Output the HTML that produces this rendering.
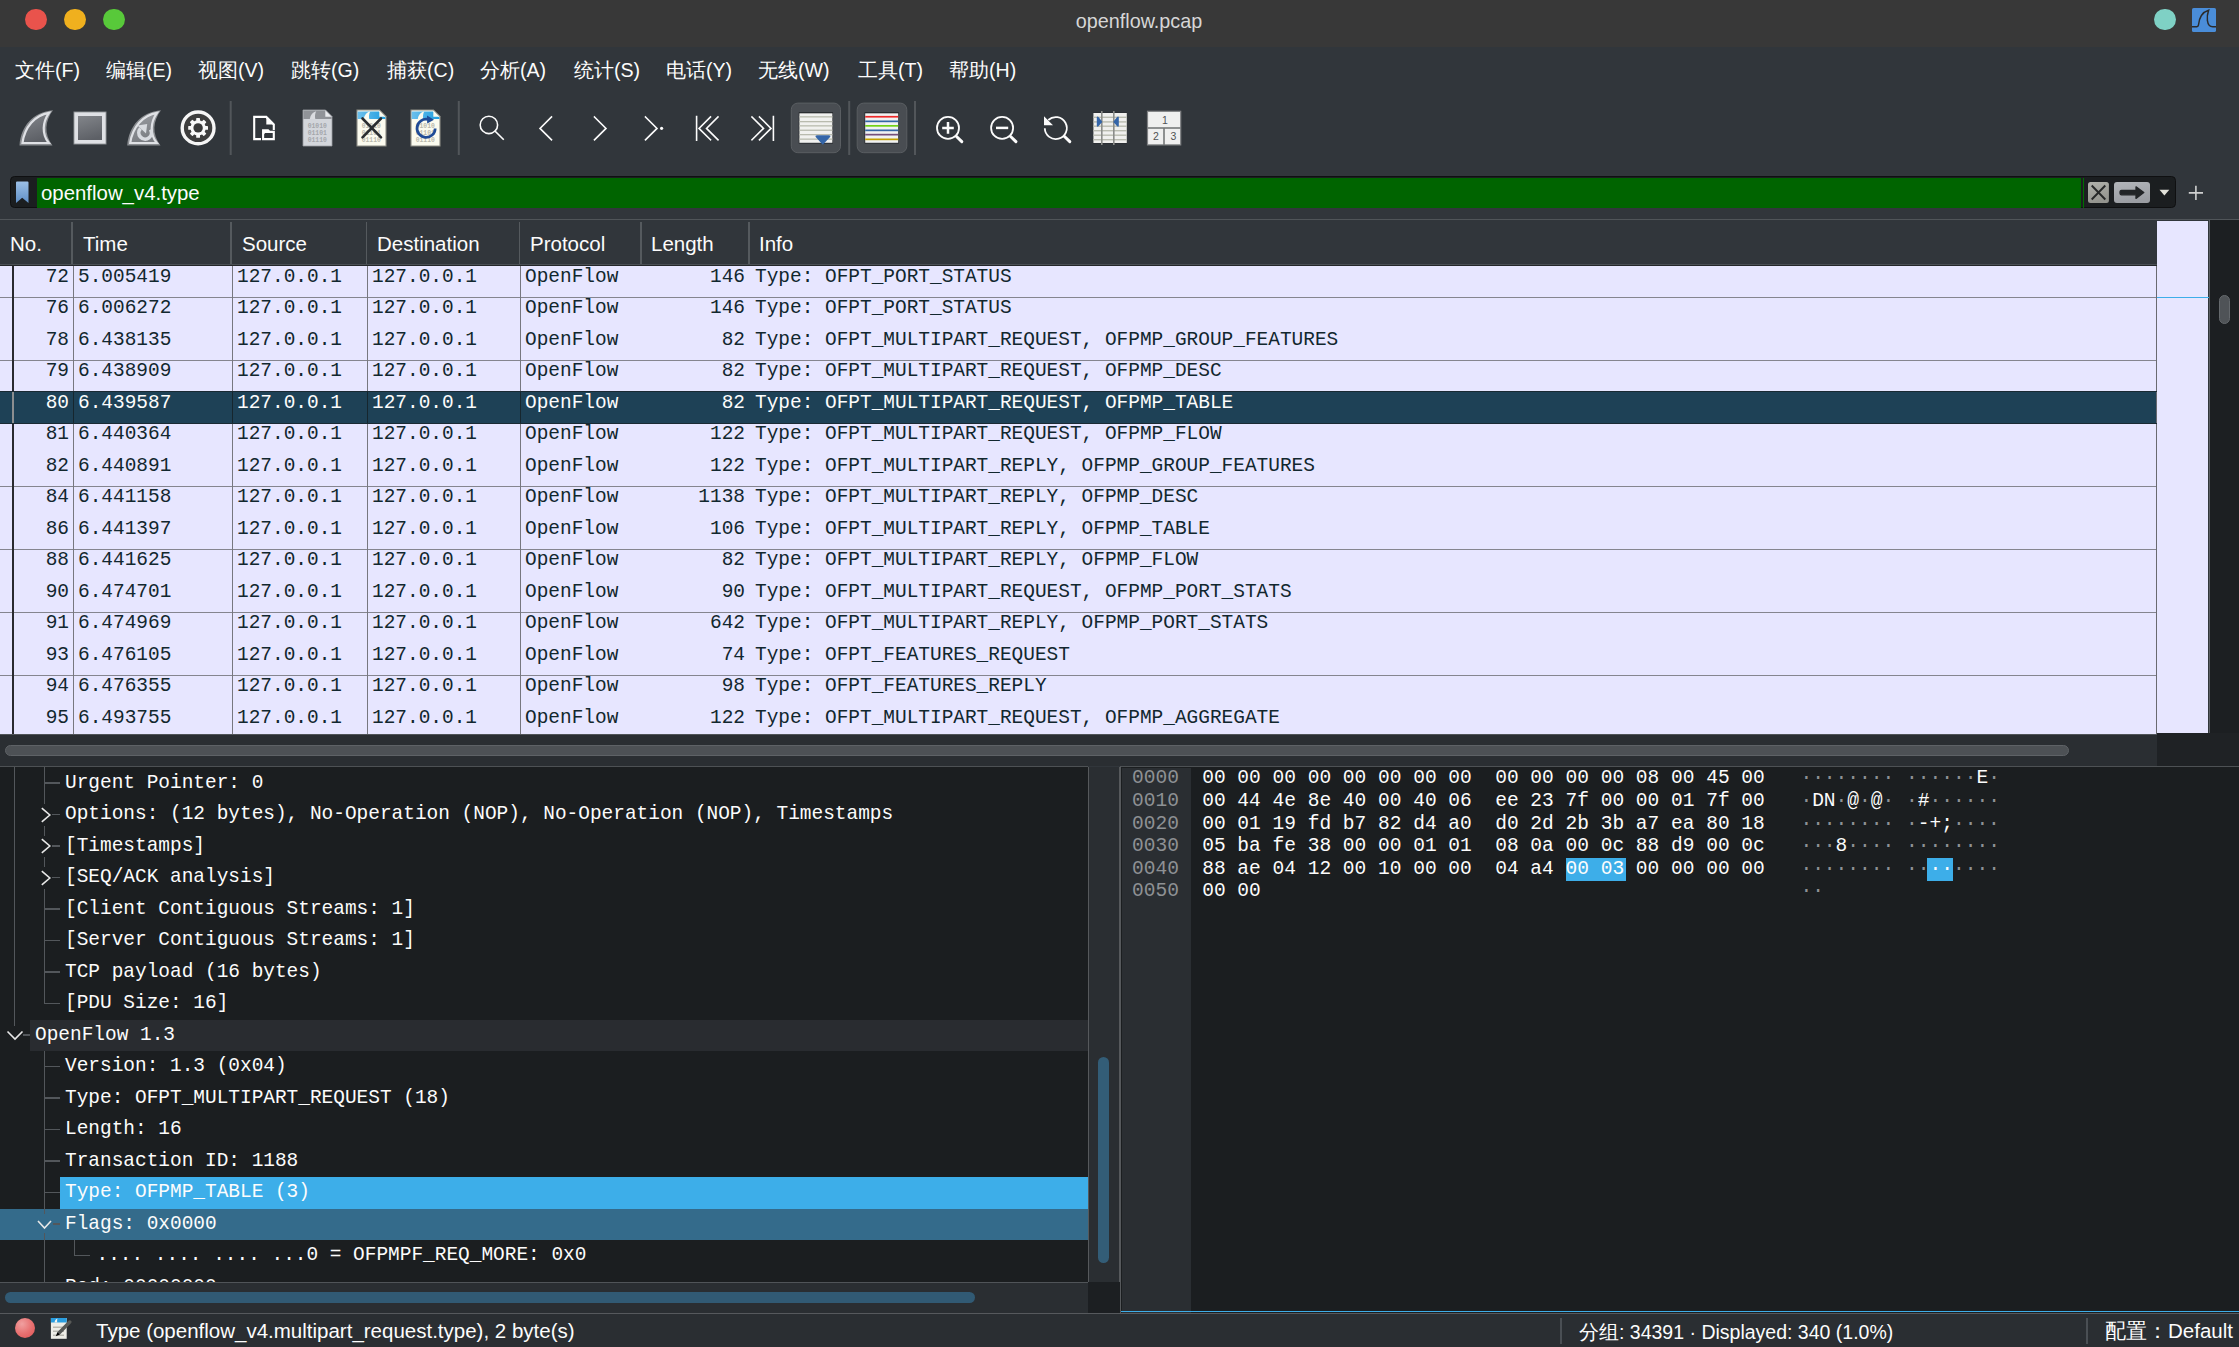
<!DOCTYPE html>
<html><head><meta charset="utf-8">
<style>
*{box-sizing:border-box}
html,body{margin:0;padding:0}
body{width:2239px;height:1347px;overflow:hidden;position:relative;background:#31363b;font-family:"Liberation Sans",sans-serif;color:#fcfcfc}
.a{position:absolute}
.mono{font-family:"Liberation Mono",monospace}
#title{left:0;top:0;width:2239px;height:47px;background:#383838}
.tl{position:absolute;top:9.1px;width:21.4px;height:21.4px;border-radius:50%}
#menu span{position:absolute;top:56.5px;font-size:19.6px;line-height:26px;white-space:nowrap}
.sep{position:absolute;top:101px;width:2px;height:54px;background:#4a4f54}
/* packet list */
#plist{left:0;top:219px;width:2239px;height:548px}
#hdr{left:0;top:220px;width:2157px;height:45px;background:#31363b;border-bottom:1px solid #4a4f54}
#hdr span{position:absolute;top:11px;font-size:20.5px;line-height:26px}
.hs{position:absolute;top:1.5px;width:1.7px;height:42.5px;background:#555a5e}
.row{position:absolute;left:0;width:2157px;height:31.5px;background:#e7e6ff;color:#12272e;font-family:"Liberation Mono",monospace;font-size:19.45px;line-height:22px;white-space:pre}
.row span{position:absolute;top:0.2px}
.row.sel{background:#1e4156;color:#fcfcfc}
.hl{position:absolute;left:0;width:2157px;height:1px;background:#85858f}
.vl{position:absolute;width:1px;background:#77777f}
/* details */
#detail{left:0;top:766px;width:1088px;height:516px;background:#1b1e20;overflow:hidden;border-top:1px solid #4d5154}
.dr{position:absolute;height:31.5px;font-family:"Liberation Mono",monospace;font-size:19.45px;line-height:31.5px;white-space:pre;color:#fcfcfc}
#hex{left:1120px;top:766px;width:1119px;height:547px;background:#1b1e20;overflow:hidden;border-top:1px solid #4d5154;border-left:1px solid #56595c}
.hx{position:absolute;font-family:"Liberation Mono",monospace;font-size:19.55px;line-height:22px;white-space:pre}
.asc{color:#fcfcfc}
.asc i{font-style:normal;color:#8e9194}
.asc b{font-weight:normal;color:#fcfcfc}
#status{left:0;top:1313px;width:2239px;height:34px;background:#2a2e32;border-top:1.6px solid #56595d}
#status span{position:absolute;top:4px;font-size:20.5px;line-height:26px;white-space:nowrap}
</style></head><body>

<!-- title bar -->
<div id="title" class="a">
  <div class="tl" style="left:25.2px;background:#e9534c"></div>
  <div class="tl" style="left:64.2px;background:#f0b01e"></div>
  <div class="tl" style="left:103.2px;background:#58c93a"></div>
  <div class="a" style="left:0;top:8px;width:2278px;text-align:center;font-size:19.8px;line-height:26px;color:#d6d6d6">openflow.pcap</div>
  <div class="a" style="left:2154.4px;top:9.3px;width:21.2px;height:21.2px;border-radius:50%;background:#7fd1c5"></div>
  <svg class="a" style="left:2191.8px;top:7.8px" width="24" height="24" viewBox="0 0 24 24"><rect width="24" height="24" rx="1.6" fill="#4a8dd9"/><path d="M0 18.7 H5 Q6.2 18.7 6.4 17.2 C7.2 9 10.5 4 16.6 2.2 C15.3 6 15.1 10 15.4 12.5 C15.9 16.5 17.6 18.7 20.8 18.7 H24" fill="none" stroke="#2b2b2b" stroke-width="1.5"/></svg>
</div>

<!-- menu -->
<div id="menu">
  <span style="left:15px">文件(F)</span>
  <span style="left:106px">编辑(E)</span>
  <span style="left:198px">视图(V)</span>
  <span style="left:291px">跳转(G)</span>
  <span style="left:387px">捕获(C)</span>
  <span style="left:480px">分析(A)</span>
  <span style="left:574px">统计(S)</span>
  <span style="left:666px">电话(Y)</span>
  <span style="left:758px">无线(W)</span>
  <span style="left:858px">工具(T)</span>
  <span style="left:949px">帮助(H)</span>
</div>

<!-- toolbar -->
<svg class="a" style="left:0;top:0" width="1200" height="170" viewBox="0 0 1200 170">
<defs>
 <linearGradient id="gfin" x1="0" y1="0" x2="0.3" y2="1"><stop offset="0" stop-color="#85888d"/><stop offset="1" stop-color="#5d6066"/></linearGradient>
 <linearGradient id="gfin2" x1="0" y1="0" x2="0.3" y2="1"><stop offset="0" stop-color="#9a9da2"/><stop offset="1" stop-color="#7b7e83"/></linearGradient>
 <linearGradient id="gblue" x1="0" y1="0" x2="1" y2="0"><stop offset="0" stop-color="#6cc0ec"/><stop offset="1" stop-color="#1f9ee0"/></linearGradient>
</defs>
<!-- start capture fin -->
<path d="M19.5 145.5 C21 126 33 112 53 110.3 C45 121 43.5 134 52.5 145.5 Z" fill="#8a8d91"/>
<path d="M22.5 143 C24.5 127 35 115 49 112.8 C42.5 122 41.5 134 48.8 143 Z" fill="url(#gfin)" stroke="#dfe1e5" stroke-width="2.2"/>
<!-- stop -->
<rect x="73.5" y="111.5" width="33" height="33" fill="#8a8d91"/>
<rect x="76.2" y="114.2" width="27.6" height="27.6" fill="url(#gfin)" stroke="#dfe1e5" stroke-width="3.6"/>
<!-- restart fin -->
<path d="M127.2 145.5 C129 126 141 112 161 110.3 C153 121 151.5 134 160.5 145.5 Z" fill="#8a8d91"/>
<path d="M130.2 143 C132.5 127 143 115 157 112.8 C150.5 122 149.5 134 156.8 143 Z" fill="url(#gfin2)" stroke="#dfe1e5" stroke-width="2.2"/>
<path d="M140.5 128.5 A6.3 6.3 0 1 0 150.5 129.5" fill="none" stroke="#d8dbe0" stroke-width="3.6"/>
<path d="M137.5 125.5 L147.2 124 L146 133.5 Z" fill="#d8dbe0"/>
<!-- gear -->
<circle cx="198.1" cy="127.9" r="15.9" fill="#3e3e3e" stroke="#f6f6f6" stroke-width="3.4"/>
<g transform="translate(198.1 127.9)" fill="#fafafa"><circle r="7.6"/><rect x="-1.9" y="-9.9" width="3.8" height="4" rx="0.6" transform="rotate(0)"/><rect x="-1.9" y="-9.9" width="3.8" height="4" rx="0.6" transform="rotate(45)"/><rect x="-1.9" y="-9.9" width="3.8" height="4" rx="0.6" transform="rotate(90)"/><rect x="-1.9" y="-9.9" width="3.8" height="4" rx="0.6" transform="rotate(135)"/><rect x="-1.9" y="-9.9" width="3.8" height="4" rx="0.6" transform="rotate(180)"/><rect x="-1.9" y="-9.9" width="3.8" height="4" rx="0.6" transform="rotate(225)"/><rect x="-1.9" y="-9.9" width="3.8" height="4" rx="0.6" transform="rotate(270)"/><rect x="-1.9" y="-9.9" width="3.8" height="4" rx="0.6" transform="rotate(315)"/><circle r="4.7" fill="#3a3a3a"/></g>
<!-- separators -->
<rect x="229.7" y="101" width="2" height="54" fill="#52565a"/>
<rect x="457.8" y="101" width="2" height="54" fill="#52565a"/>
<rect x="848.2" y="101" width="2" height="54" fill="#52565a"/>
<rect x="914" y="101" width="2" height="54" fill="#52565a"/>
<!-- open -->
<path d="M261 139.1 H254.2 V116.9 H266.3 L273.8 124.4 V130" fill="none" stroke="#fff" stroke-width="2.1"/>
<path d="M266.3 116.9 V124.4 H273.8 Z" fill="#fff"/>
<path d="M263.1 139.1 V130.2 H268 L269.5 131.8 H273.8 V139.1 Z" fill="none" stroke="#fff" stroke-width="2.1"/>
<path d="M263.1 134 L264.6 132 H273.8" fill="none" stroke="#fff" stroke-width="2"/>
<!-- doc gray -->
<path d="M303 110 H325.5 L332 116.5 V146 H303 Z" fill="#d3d6db" stroke="#9a9da1" stroke-width="0.8"/>
<path d="M303.4 110.4 H325.3 L331.6 116.7 V119 H303.4 Z" fill="#909398"/>
<path d="M309.8 119 C310.5 114.5 313 112 316.2 111.2 C315 113.5 314.7 116.5 315.3 119 Z" fill="#dadce0"/>
<path d="M325.3 110.4 V116.7 H331.6 Z" fill="#e8eaed"/>
<g font-family="Liberation Mono" font-size="6.4" fill="#a4a7ab" font-weight="bold"><text x="307.7" y="127.8">01010</text><text x="307.7" y="134.8">01101</text><text x="307.7" y="141.6">01110</text></g>
<!-- doc close -->
<path d="M357 110 H379.5 L386 116.5 V146 H357 Z" fill="#fbfbef" stroke="#8d8d85" stroke-width="1.1"/>
<path d="M357.6 111.4 H379.3 L385.4 117.5 V119 H357.6 Z" fill="url(#gblue)"/>
<path d="M363.8 119 C364.5 114.5 367 112 370.2 111.4 C369 113.5 368.7 116.5 369.3 119 Z" fill="#fbfbef"/>
<path d="M379.3 110.6 V116.7 H385.4 Z" fill="#fbfbef"/>
<g font-family="Liberation Mono" font-size="6.4" fill="#b9b9ad" font-weight="bold"><text x="361.7" y="127.8">01010</text><text x="361.7" y="134.8">01101</text><text x="361.7" y="141.6">01110</text></g>
<path d="M362.5 118.5 L381 137.3 M381 118.5 L362.5 137.3" stroke="#2a2d30" stroke-width="2.6" stroke-linecap="round"/>
<!-- doc reload -->
<path d="M411 110 H433.5 L440 116.5 V146 H411 Z" fill="#fbfbef" stroke="#8d8d85" stroke-width="1.1"/>
<path d="M411.6 111.4 H433.3 L439.4 117.5 V119 H411.6 Z" fill="url(#gblue)"/>
<path d="M417.8 119 C418.5 114.5 421 112 424.2 111.4 C423 113.5 422.7 116.5 423.3 119 Z" fill="#fbfbef"/>
<path d="M433.3 110.6 V116.7 H439.4 Z" fill="#fbfbef"/>
<g font-family="Liberation Mono" font-size="6.4" fill="#b9b9ad" font-weight="bold"><text x="415.7" y="127.8">01010</text><text x="415.7" y="134.8">01101</text><text x="415.7" y="141.6">01110</text></g>
<path d="M435.2 128.5 A9.1 9.1 0 1 1 428 119.4" fill="none" stroke="#1f4b96" stroke-width="2.7"/>
<path d="M427 115.6 L434 119.8 L427.2 123.6 Z" fill="#1f4b96"/>
<!-- search -->
<g fill="none" stroke="#fcfcfc" stroke-width="1.6" stroke-linecap="square">
<circle cx="488.9" cy="124.9" r="8.7"/>
<path d="M495.2 131.2 L503.2 139.2"/>
<path d="M551.5 117 L540 128.4 L551.5 139.8"/>
<path d="M594.5 117 L606 128.4 L594.5 139.8"/>
<path d="M645.5 117 L657 128.4 L645.5 139.8"/>
<path d="M696.6 116.5 V140.3 M710.5 117 L699 128.4 L710.5 139.8 M718 117 L706.5 128.4 L718 139.8"/>
<path d="M773.4 116.5 V140.3 M752 117 L763.5 128.4 L752 139.8 M759.5 117 L771 128.4 L759.5 139.8"/>
</g>
<circle cx="661.6" cy="128.3" r="1.6" fill="#fcfcfc"/>
<!-- colorize buttons -->
<rect x="791.3" y="103.1" width="49.2" height="49.6" rx="6.5" fill="#494d52" stroke="#5a5e62" stroke-width="1"/>
<rect x="857.2" y="103.1" width="49.6" height="49.6" rx="6.5" fill="#494d52" stroke="#5a5e62" stroke-width="1"/>
<rect x="798.8" y="112.3" width="34.2" height="31.2" fill="#1e2124"/>
<rect x="799.4" y="113.3" width="33" height="29.5" fill="#f1f1ef"/>
<g fill="#b9bbae"><rect x="799.4" y="116.2" width="33" height="1.3"/><rect x="799.4" y="121" width="33" height="1.3"/><rect x="799.4" y="125.2" width="33" height="1.3"/><rect x="799.4" y="129.6" width="33" height="1.3"/><rect x="799.4" y="134" width="33" height="1.3"/><rect x="799.4" y="138.5" width="33" height="1.3"/></g>
<path d="M815.5 136.8 Q815 135.3 817 135.3 H829 Q831 135.3 830.3 136.8 L823.5 144 Q822.7 145 822 144 Z" fill="#3465a8"/>
<rect x="864.6" y="112.3" width="34.2" height="31.2" fill="#1e2124"/>
<rect x="865.2" y="113.3" width="33" height="29.5" fill="#f1f2f2"/>
<rect x="865.2" y="115.9" width="33" height="1.7" fill="#ef2929"/>
<rect x="865.2" y="120.5" width="33" height="1.7" fill="#3465a4"/>
<rect x="865.2" y="125" width="33" height="1.7" fill="#73d216"/>
<rect x="865.2" y="129.5" width="33" height="1.7" fill="#3465a4"/>
<rect x="865.2" y="133.8" width="33" height="1.7" fill="#75507b"/>
<rect x="865.2" y="138.5" width="33" height="1.7" fill="#c4a000"/>
<!-- zoom -->
<g fill="none" stroke="#fcfcfc" stroke-width="1.8">
<circle cx="948" cy="127.9" r="11"/>
<circle cx="1002.1" cy="127.9" r="11"/>
<path d="M1044.8 128.3 A11 11 0 1 0 1048.3 120"/>
</g>
<g stroke="#fcfcfc" stroke-width="3" stroke-linecap="round">
<path d="M956.5 136.5 L961.8 141.6"/><path d="M1010.6 136.5 L1015.9 141.6"/><path d="M1064.5 136.5 L1069.8 141.6"/>
</g>
<path d="M942.2 127.9 H953.8 M948 122.1 V133.7" stroke="#fcfcfc" stroke-width="2.5"/>
<path d="M996 127.9 H1008.2" stroke="#fcfcfc" stroke-width="2.5"/>
<path d="M1044 116.3 V125.2 H1053 Z" fill="#fcfcfc"/>
<!-- resize columns -->
<rect x="1093" y="112.5" width="34" height="31" fill="#1e2124" opacity="0.6"/>
<rect x="1093.4" y="113" width="33.4" height="30" fill="#f0f0ee"/>
<g fill="#babcb0"><rect x="1093.4" y="116.6" width="33.4" height="1.4"/><rect x="1093.4" y="121.2" width="33.4" height="1.4"/><rect x="1093.4" y="125.5" width="33.4" height="1.4"/><rect x="1093.4" y="130" width="33.4" height="1.4"/><rect x="1093.4" y="134.5" width="33.4" height="1.4"/><rect x="1093.4" y="139" width="33.4" height="1.4"/></g>
<rect x="1101" y="111" width="1.6" height="34" fill="#8b8d8a"/>
<rect x="1113" y="111" width="1.6" height="34" fill="#8b8d8a"/>
<path d="M1096.8 117.5 Q1097 116 1098.5 117 L1101.9 121.2 Q1102.3 121.7 1101.9 122.2 L1098.5 126.3 Q1097 127.2 1096.8 125.8 Z" fill="#3465a8"/>
<path d="M1118.8 117.5 Q1118.6 116 1117.1 117 L1113.7 121.2 Q1113.3 121.7 1113.7 122.2 L1117.1 126.3 Q1118.6 127.2 1118.8 125.8 Z" fill="#3465a8"/>
<!-- layout -->
<rect x="1147.5" y="111.3" width="33.2" height="33.6" fill="#efefef" stroke="#808284" stroke-width="1.2"/>
<rect x="1147.5" y="127.2" width="33.2" height="1.6" fill="#77797b"/>
<rect x="1163.2" y="128" width="1.6" height="17" fill="#77797b"/>
<g font-family="Liberation Sans" font-size="10.5" fill="#505254" text-anchor="middle"><text x="1165" y="123.7">1</text><text x="1156" y="140.3">2</text><text x="1173.5" y="140.3">3</text></g>
</svg>

<!-- filter -->
<div class="a" style="left:10px;top:176.4px;width:2166px;height:32.1px;background:#1b1e20;border-radius:4.5px;border:1px solid #0f1011"></div>
<div class="a" style="left:37px;top:177.5px;width:2044.2px;height:30px;background:#006400"></div>
<div class="a" style="left:2082.8px;top:177.5px;width:1.3px;height:30px;background:#007000"></div>
<svg class="a" style="left:0;top:170px" width="2239" height="45" viewBox="0 170 2239 45">
 <defs><linearGradient id="gbm" x1="0" y1="0" x2="0" y2="1"><stop offset="0" stop-color="#9cc0e6"/><stop offset="1" stop-color="#5f8fc6"/></linearGradient>
 <linearGradient id="gbtn" x1="0" y1="0" x2="0.3" y2="1"><stop offset="0" stop-color="#b0b1ab"/><stop offset="1" stop-color="#94958f"/></linearGradient>
 <linearGradient id="gbtn2" x1="0" y1="0" x2="0.3" y2="1"><stop offset="0" stop-color="#b3b6ba"/><stop offset="1" stop-color="#9b9ea3"/></linearGradient></defs>
 <path d="M16 182.5 Q16 181.5 17 181.5 H27.5 Q28.5 181.5 28.5 182.5 V203 L22.2 197.8 L16 203 Z" fill="url(#gbm)"/>
 <rect x="2088" y="181.9" width="20.9" height="21.1" rx="2.5" fill="url(#gbtn)"/>
 <path d="M2091.7 185.5 L2105.3 199.5 M2105.3 185.5 L2091.7 199.5" stroke="#262828" stroke-width="1.9"/>
 <rect x="2114" y="181.9" width="36" height="21.1" rx="3" fill="url(#gbtn2)"/>
 <path d="M2121.5 190.4 H2136 V186.8 L2143.8 192.6 L2136 198.4 V194.8 H2121.5 Q2120 194.8 2120 192.6 Q2120 190.4 2121.5 190.4 Z" fill="#222527" stroke="#222527" stroke-width="1.3" stroke-linejoin="round"/>
 <path d="M2159.5 189.8 H2169.3 L2164.4 195.4 Z" fill="#e2e2da"/>
 <path d="M2188.8 192.9 H2203 M2195.9 185.8 V200" stroke="#cfd0d0" stroke-width="1.6"/>
</svg>
<div class="a" style="left:41px;top:180px;font-size:20.4px;line-height:26px">openflow_v4.type</div>

<!-- packet list -->
<div class="a" style="left:0;top:219px;width:2239px;height:1px;background:#505559"></div>
<div id="hdr" class="a">
  <span style="left:10px">No.</span>
  <span style="left:83px">Time</span>
  <span style="left:242px">Source</span>
  <span style="left:377px">Destination</span>
  <span style="left:530px">Protocol</span>
  <span style="left:651px">Length</span>
  <span style="left:759px">Info</span>
  <div class="hs" style="left:71.2px"></div>
  <div class="hs" style="left:230.3px"></div>
  <div class="hs" style="left:365.5px"></div>
  <div class="hs" style="left:518.5px"></div>
  <div class="hs" style="left:640px"></div>
  <div class="hs" style="left:748px"></div>
</div>
<div class="a" style="left:0;top:265px;width:2157px;height:1px;background:#24272a"></div><div class="a" style="left:0;top:265.8px;width:2157px;height:468.2px;overflow:hidden">
<div class="row" style="top:0.0px"><span style="right:2088px">72</span><span style="left:78px">5.005419</span><span style="left:237px">127.0.0.1</span><span style="left:372px">127.0.0.1</span><span style="left:525px">OpenFlow</span><span style="right:1412px">146</span><span style="left:755px">Type: OFPT_PORT_STATUS</span></div>
<div class="row" style="top:31.5px"><span style="right:2088px">76</span><span style="left:78px">6.006272</span><span style="left:237px">127.0.0.1</span><span style="left:372px">127.0.0.1</span><span style="left:525px">OpenFlow</span><span style="right:1412px">146</span><span style="left:755px">Type: OFPT_PORT_STATUS</span></div>
<div class="row" style="top:63.0px"><span style="right:2088px">78</span><span style="left:78px">6.438135</span><span style="left:237px">127.0.0.1</span><span style="left:372px">127.0.0.1</span><span style="left:525px">OpenFlow</span><span style="right:1412px">82</span><span style="left:755px">Type: OFPT_MULTIPART_REQUEST, OFPMP_GROUP_FEATURES</span></div>
<div class="row" style="top:94.5px"><span style="right:2088px">79</span><span style="left:78px">6.438909</span><span style="left:237px">127.0.0.1</span><span style="left:372px">127.0.0.1</span><span style="left:525px">OpenFlow</span><span style="right:1412px">82</span><span style="left:755px">Type: OFPT_MULTIPART_REQUEST, OFPMP_DESC</span></div>
<div class="row sel" style="top:126.0px"><span style="right:2088px">80</span><span style="left:78px">6.439587</span><span style="left:237px">127.0.0.1</span><span style="left:372px">127.0.0.1</span><span style="left:525px">OpenFlow</span><span style="right:1412px">82</span><span style="left:755px">Type: OFPT_MULTIPART_REQUEST, OFPMP_TABLE</span></div>
<div class="row" style="top:157.5px"><span style="right:2088px">81</span><span style="left:78px">6.440364</span><span style="left:237px">127.0.0.1</span><span style="left:372px">127.0.0.1</span><span style="left:525px">OpenFlow</span><span style="right:1412px">122</span><span style="left:755px">Type: OFPT_MULTIPART_REQUEST, OFPMP_FLOW</span></div>
<div class="row" style="top:189.0px"><span style="right:2088px">82</span><span style="left:78px">6.440891</span><span style="left:237px">127.0.0.1</span><span style="left:372px">127.0.0.1</span><span style="left:525px">OpenFlow</span><span style="right:1412px">122</span><span style="left:755px">Type: OFPT_MULTIPART_REPLY, OFPMP_GROUP_FEATURES</span></div>
<div class="row" style="top:220.5px"><span style="right:2088px">84</span><span style="left:78px">6.441158</span><span style="left:237px">127.0.0.1</span><span style="left:372px">127.0.0.1</span><span style="left:525px">OpenFlow</span><span style="right:1412px">1138</span><span style="left:755px">Type: OFPT_MULTIPART_REPLY, OFPMP_DESC</span></div>
<div class="row" style="top:252.0px"><span style="right:2088px">86</span><span style="left:78px">6.441397</span><span style="left:237px">127.0.0.1</span><span style="left:372px">127.0.0.1</span><span style="left:525px">OpenFlow</span><span style="right:1412px">106</span><span style="left:755px">Type: OFPT_MULTIPART_REPLY, OFPMP_TABLE</span></div>
<div class="row" style="top:283.5px"><span style="right:2088px">88</span><span style="left:78px">6.441625</span><span style="left:237px">127.0.0.1</span><span style="left:372px">127.0.0.1</span><span style="left:525px">OpenFlow</span><span style="right:1412px">82</span><span style="left:755px">Type: OFPT_MULTIPART_REPLY, OFPMP_FLOW</span></div>
<div class="row" style="top:315.0px"><span style="right:2088px">90</span><span style="left:78px">6.474701</span><span style="left:237px">127.0.0.1</span><span style="left:372px">127.0.0.1</span><span style="left:525px">OpenFlow</span><span style="right:1412px">90</span><span style="left:755px">Type: OFPT_MULTIPART_REQUEST, OFPMP_PORT_STATS</span></div>
<div class="row" style="top:346.5px"><span style="right:2088px">91</span><span style="left:78px">6.474969</span><span style="left:237px">127.0.0.1</span><span style="left:372px">127.0.0.1</span><span style="left:525px">OpenFlow</span><span style="right:1412px">642</span><span style="left:755px">Type: OFPT_MULTIPART_REPLY, OFPMP_PORT_STATS</span></div>
<div class="row" style="top:378.0px"><span style="right:2088px">93</span><span style="left:78px">6.476105</span><span style="left:237px">127.0.0.1</span><span style="left:372px">127.0.0.1</span><span style="left:525px">OpenFlow</span><span style="right:1412px">74</span><span style="left:755px">Type: OFPT_FEATURES_REQUEST</span></div>
<div class="row" style="top:409.5px"><span style="right:2088px">94</span><span style="left:78px">6.476355</span><span style="left:237px">127.0.0.1</span><span style="left:372px">127.0.0.1</span><span style="left:525px">OpenFlow</span><span style="right:1412px">98</span><span style="left:755px">Type: OFPT_FEATURES_REPLY</span></div>
<div class="row" style="top:441.0px"><span style="right:2088px">95</span><span style="left:78px">6.493755</span><span style="left:237px">127.0.0.1</span><span style="left:372px">127.0.0.1</span><span style="left:525px">OpenFlow</span><span style="right:1412px">122</span><span style="left:755px">Type: OFPT_MULTIPART_REQUEST, OFPMP_AGGREGATE</span></div>
<div class="hl" style="top:31.0px"></div>
<div class="hl" style="top:94.0px"></div>
<div class="hl" style="top:220.0px"></div>
<div class="hl" style="top:283.0px"></div>
<div class="hl" style="top:346.0px"></div>
<div class="hl" style="top:409.0px"></div>
<div class="vl" style="left:73px;top:0;height:470px"></div>
<div class="vl" style="left:232px;top:0;height:470px"></div>
<div class="vl" style="left:367px;top:0;height:470px"></div>
<div class="vl" style="left:520px;top:0;height:470px"></div>
<div class="vl" style="left:12px;top:0;height:470px;width:2px;background:#2a2a30"></div>
<div class="vl" style="left:2156px;top:0;height:470px;background:#6a6a70"></div>
<div class="a" style="left:0;top:125.5px;width:2157px;height:1px;background:#1a2a33"></div>
<div class="a" style="left:0;top:157.0px;width:2157px;height:1px;background:#1a2a33"></div>
<div class="vl" style="left:12px;top:126.0px;height:31.0px;width:2px;background:#8c8e90"></div>
<div class="vl" style="left:73px;top:126.0px;height:31.0px;background:#16262e"></div>
<div class="vl" style="left:232px;top:126.0px;height:31.0px;background:#16262e"></div>
<div class="vl" style="left:367px;top:126.0px;height:31.0px;background:#16262e"></div>
<div class="vl" style="left:520px;top:126.0px;height:31.0px;background:#16262e"></div>
</div>
<!-- right strip + vscroll -->
<div class="a" style="left:2157px;top:221px;width:51px;height:512.3px;background:#e7e6ff"></div>
<div class="a" style="left:2157px;top:296.8px;width:51.5px;height:1px;background:#3daee9"></div>
<div class="a" style="left:2208.5px;top:220px;width:30.5px;height:546px;background:#1c1f22"></div>
<div class="a" style="left:2208.5px;top:220px;width:1.5px;height:513px;background:#5a5e62"></div>
<div class="a" style="left:2218.8px;top:294.7px;width:11.2px;height:29.3px;border-radius:6px;background:#4f5357;border:1px solid #65696d"></div>
<!-- hscroll packet list -->
<div class="a" style="left:0;top:734px;width:2157px;height:32px;background:#2a2e32;border-top:1.5px solid #505458"></div>
<div class="a" style="left:2157px;top:733.3px;width:82px;height:32.5px;background:#1f2225"></div>
<div class="a" style="left:5.4px;top:744.7px;width:2064px;height:11.3px;border-radius:6px;background:#4d5155;border:1px solid #5e6266"></div>


<!-- details -->
<div id="detail" class="a"><div class="a" style="left:30px;top:252.65px;width:1058px;height:31.5px;background:#292c30"></div>
<div class="a" style="left:60px;top:410.15px;width:1028px;height:31.5px;background:#3daee9"></div>
<div class="a" style="left:0;top:441.65px;width:1088px;height:31.5px;background:#346b8b"></div>
<div class="a" style="left:13.5px;top:0;width:1.5px;height:258.65px;background:#53575b"></div>
<div class="a" style="left:43.5px;top:0px;width:1.5px;height:37.15px;background:#53575b"></div>
<div class="a" style="left:43.5px;top:58.65px;width:1.5px;height:10.000000000000007px;background:#53575b"></div>
<div class="a" style="left:43.5px;top:90.15px;width:1.5px;height:10.0px;background:#53575b"></div>
<div class="a" style="left:43.5px;top:121.65px;width:1.5px;height:115.75px;background:#53575b"></div>
<div class="a" style="left:43.5px;top:284.15px;width:1.5px;height:163.0px;background:#53575b"></div>
<div class="a" style="left:43.5px;top:465.65px;width:1.5px;height:134.35000000000002px;background:#53575b"></div>
<div class="a" style="left:43.5px;top:15.399999999999999px;width:16.200000000000003px;height:1.5px;background:#53575b"></div>
<div class="dr" style="top:0.65px;left:65px">Urgent Pointer: 0</div>
<svg class="a" style="left:40px;top:39.9px" width="12" height="16"><path d="M1.8 1.2 L9.8 8 L1.8 14.8" stroke="#e8e8e8" stroke-width="1.6" fill="none"/></svg>
<div class="a" style="left:52px;top:46.9px;width:7.700000000000003px;height:1.5px;background:#53575b"></div>
<div class="dr" style="top:32.15px;left:65px">Options: (12 bytes), No-Operation (NOP), No-Operation (NOP), Timestamps</div>
<svg class="a" style="left:40px;top:71.4px" width="12" height="16"><path d="M1.8 1.2 L9.8 8 L1.8 14.8" stroke="#e8e8e8" stroke-width="1.6" fill="none"/></svg>
<div class="a" style="left:52px;top:78.4px;width:7.700000000000003px;height:1.5px;background:#53575b"></div>
<div class="dr" style="top:63.65px;left:65px">[Timestamps]</div>
<svg class="a" style="left:40px;top:102.9px" width="12" height="16"><path d="M1.8 1.2 L9.8 8 L1.8 14.8" stroke="#e8e8e8" stroke-width="1.6" fill="none"/></svg>
<div class="a" style="left:52px;top:109.9px;width:7.700000000000003px;height:1.5px;background:#53575b"></div>
<div class="dr" style="top:95.15px;left:65px">[SEQ/ACK analysis]</div>
<div class="a" style="left:43.5px;top:141.4px;width:16.200000000000003px;height:1.5px;background:#53575b"></div>
<div class="dr" style="top:126.65px;left:65px">[Client Contiguous Streams: 1]</div>
<div class="a" style="left:43.5px;top:172.9px;width:16.200000000000003px;height:1.5px;background:#53575b"></div>
<div class="dr" style="top:158.15px;left:65px">[Server Contiguous Streams: 1]</div>
<div class="a" style="left:43.5px;top:204.4px;width:16.200000000000003px;height:1.5px;background:#53575b"></div>
<div class="dr" style="top:189.65px;left:65px">TCP payload (16 bytes)</div>
<div class="a" style="left:43.5px;top:235.9px;width:16.200000000000003px;height:1.5px;background:#53575b"></div>
<div class="dr" style="top:221.15px;left:65px">[PDU Size: 16]</div>
<svg class="a" style="left:6px;top:263.4px" width="18" height="11"><path d="M1.5 1.5 L9 9 L16.5 1.5" stroke="#e8e8e8" stroke-width="1.6" fill="none"/></svg>
<div class="a" style="left:23px;top:267.4px;width:7px;height:1.5px;background:#53575b"></div>
<div class="dr" style="top:252.65px;left:35px">OpenFlow 1.3</div>
<div class="a" style="left:43.5px;top:298.9px;width:16.200000000000003px;height:1.5px;background:#53575b"></div>
<div class="dr" style="top:284.15px;left:65px">Version: 1.3 (0x04)</div>
<div class="a" style="left:43.5px;top:330.4px;width:16.200000000000003px;height:1.5px;background:#53575b"></div>
<div class="dr" style="top:315.65px;left:65px">Type: OFPT_MULTIPART_REQUEST (18)</div>
<div class="a" style="left:43.5px;top:361.9px;width:16.200000000000003px;height:1.5px;background:#53575b"></div>
<div class="dr" style="top:347.15px;left:65px">Length: 16</div>
<div class="a" style="left:43.5px;top:393.4px;width:16.200000000000003px;height:1.5px;background:#53575b"></div>
<div class="dr" style="top:378.65px;left:65px">Transaction ID: 1188</div>
<div class="a" style="left:43.5px;top:424.9px;width:16.200000000000003px;height:1.5px;background:#53575b"></div>
<div class="dr" style="top:410.15px;left:65px">Type: OFPMP_TABLE (3)</div>
<svg class="a" style="left:37px;top:452.9px" width="16" height="10"><path d="M1 1 L7.5 8 L14 1" stroke="#e8e8e8" stroke-width="1.6" fill="none"/></svg>
<div class="a" style="left:52.5px;top:456.4px;width:7.200000000000003px;height:1.5px;background:#53575b"></div>
<div class="dr" style="top:441.65px;left:65px">Flags: 0x0000</div>
<div class="a" style="left:73.5px;top:473.15px;width:1.5px;height:16.25px;background:#53575b"></div>
<div class="a" style="left:73.5px;top:487.9px;width:16.299999999999997px;height:1.5px;background:#53575b"></div>
<div class="dr" style="top:473.15px;left:96.5px">.... .... .... ...0 = OFPMPF_REQ_MORE: 0x0</div>
<div class="a" style="left:43.5px;top:519.4px;width:16.200000000000003px;height:1.5px;background:#53575b"></div>
<div class="dr" style="top:504.65px;left:65px">Pad: 00000000</div></div>

<!-- hex -->
<div id="hex" class="a"><div class="a" style="left:1px;top:1px;width:69px;height:545px;background:#2a2e32"></div>
<div class="a" style="left:444.7px;top:90.6px;width:60.3px;height:23.1px;background:#3daee9"></div>
<div class="a" style="left:805.8px;top:91px;width:26.2px;height:23px;background:#3daee9"></div>
<div class="hx" style="top:0.4px;left:11px;color:#8e9194">0000</div>
<div class="hx" style="top:0.4px;left:81.2px;color:#fcfcfc">00 00 00 00 00 00 00 00  00 00 00 00 08 00 45 00</div>
<div class="hx asc" style="top:0.4px;left:679.4px"><i>·</i><i>·</i><i>·</i><i>·</i><i>·</i><i>·</i><i>·</i><i>·</i> <i>·</i><i>·</i><i>·</i><i>·</i><i>·</i><i>·</i>E<i>·</i></div>
<div class="hx" style="top:22.959999999999997px;left:11px;color:#8e9194">0010</div>
<div class="hx" style="top:22.959999999999997px;left:81.2px;color:#fcfcfc">00 44 4e 8e 40 00 40 06  ee 23 7f 00 00 01 7f 00</div>
<div class="hx asc" style="top:22.959999999999997px;left:679.4px"><i>·</i>DN<i>·</i>@<i>·</i>@<i>·</i> <i>·</i>#<i>·</i><i>·</i><i>·</i><i>·</i><i>·</i><i>·</i></div>
<div class="hx" style="top:45.519999999999996px;left:11px;color:#8e9194">0020</div>
<div class="hx" style="top:45.519999999999996px;left:81.2px;color:#fcfcfc">00 01 19 fd b7 82 d4 a0  d0 2d 2b 3b a7 ea 80 18</div>
<div class="hx asc" style="top:45.519999999999996px;left:679.4px"><i>·</i><i>·</i><i>·</i><i>·</i><i>·</i><i>·</i><i>·</i><i>·</i> <i>·</i>-+;<i>·</i><i>·</i><i>·</i><i>·</i></div>
<div class="hx" style="top:68.08px;left:11px;color:#8e9194">0030</div>
<div class="hx" style="top:68.08px;left:81.2px;color:#fcfcfc">05 ba fe 38 00 00 01 01  08 0a 00 0c 88 d9 00 0c</div>
<div class="hx asc" style="top:68.08px;left:679.4px"><i>·</i><i>·</i><i>·</i>8<i>·</i><i>·</i><i>·</i><i>·</i> <i>·</i><i>·</i><i>·</i><i>·</i><i>·</i><i>·</i><i>·</i><i>·</i></div>
<div class="hx" style="top:90.64px;left:11px;color:#8e9194">0040</div>
<div class="hx" style="top:90.64px;left:81.2px;color:#fcfcfc">88 ae 04 12 00 10 00 00  04 a4 00 03 00 00 00 00</div>
<div class="hx asc" style="top:90.64px;left:679.4px"><i>·</i><i>·</i><i>·</i><i>·</i><i>·</i><i>·</i><i>·</i><i>·</i> <i>·</i><i>·</i><b>·</b><b>·</b><i>·</i><i>·</i><i>·</i><i>·</i></div>
<div class="hx" style="top:113.2px;left:11px;color:#8e9194">0050</div>
<div class="hx" style="top:113.2px;left:81.2px;color:#fcfcfc">00 00</div>
<div class="hx asc" style="top:113.2px;left:679.4px"><i>·</i><i>·</i></div></div>
<div class="a" style="left:1088px;top:767px;width:32px;height:515px;background:#2a2e32;border-left:1px solid #56595c;border-right:1px solid #56595c"></div>
<div class="a" style="left:1098.2px;top:1057px;width:11.2px;height:205.5px;border-radius:6px;background:#335d77"></div>
<div class="a" style="left:0;top:1281.8px;width:1088px;height:32px;background:#2a2e32;border-top:1px solid #505458"></div>
<div class="a" style="left:5.4px;top:1292.3px;width:970px;height:11.1px;border-radius:6px;background:#315a74"></div>
<div class="a" style="left:1088px;top:1281.8px;width:32px;height:32px;background:#1c1f22"></div>
<div class="a" style="left:1121px;top:1310.5px;width:1118px;height:1.2px;background:#3daee9"></div>

<!-- status -->
<div id="status" class="a">
  <div class="a" style="left:15.3px;top:4.3px;width:20.2px;height:20.2px;border-radius:50%;background:radial-gradient(circle at 35% 30%,#f0a0a0 0,#e87272 50%,#de5252 100%)"></div>
<svg class="a" style="left:50px;top:3.2px" width="22" height="23" viewBox="0 0 22 23"><rect x="0.9" y="1" width="15.8" height="20.8" fill="#eeeee8"/><rect x="0.9" y="1" width="15.8" height="4.5" fill="#2a9ee0"/><path d="M4.5 5.5 C5 3 6 2 7.5 1.6 C7 3 7 4.5 7.3 5.5 Z" fill="#f4f4ee"/><g fill="#b8b8b0"><rect x="3" y="9.5" width="11" height="1.5"/><rect x="3" y="13.5" width="11" height="1.5"/><rect x="3" y="17.5" width="11" height="1.5"/></g><path d="M7.5 15 L18.5 3.8 Q19.8 2.6 21 3.8 Q22.2 5 21 6.2 L10 17.4 Z" fill="#575957"/><path d="M7.5 15 L10 17.4 L5.8 19.2 Z" fill="#000"/></svg>
  <span style="left:96px">Type (openflow_v4.multipart_request.type), 2 byte(s)</span>
  <div class="a" style="left:1560px;top:4px;width:2px;height:26px;background:#4a4f54"></div>
  <span style="left:1579px;font-size:19.5px;top:4.5px">分组: 34391 · Displayed: 340 (1.0%)</span>
  <div class="a" style="left:2086px;top:4px;width:2px;height:26px;background:#4a4f54"></div>
  <span style="left:2105px">配置：Default</span>
</div>
</body></html>
